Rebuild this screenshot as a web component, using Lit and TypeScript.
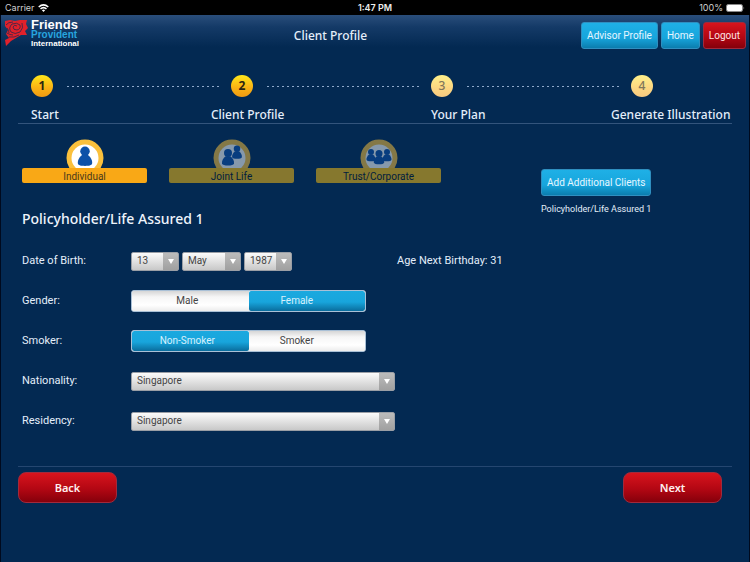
import { LitElement, html, svg, css } from "lit";
import { customElement, state } from "lit/decorators.js";
import { classMap } from "lit/directives/class-map.js";

const person = (x: number, y: number, s: number) => svg`
  <g transform="translate(${x} ${y}) scale(${s})">
    <circle cx="0" cy="-5" r="5"></circle>
    <path d="M-3 -1 C-6 1 -8 5 -7.5 8 C-7 10 -4 10.500 0 10.500 C4 10.500 7 10 7.500 8 C8 5 6 1 3 -1 Z"></path>
  </g>`;

const clientTypes = [
  { id: "individual", name: "Individual", figures: svg`${person(19, 17, 0.95)}` },
  { id: "joint", name: "Joint Life", figures: svg`${person(24, 13, 0.65)}${person(15, 18, 0.8)}` },
  {
    id: "trust",
    name: "Trust/Corporate",
    figures: svg`${person(11, 16, 0.6)}${person(27, 16, 0.6)}${person(19, 18, 0.7)}`,
  },
];

const steps = [
  { name: "Start", reached: true, wide: false },
  { name: "Client Profile", reached: true, wide: true },
  { name: "Your Plan", reached: false, wide: false },
  { name: "Generate Illustration", reached: false, wide: true },
];

@customElement("app-root")
export class AppRoot extends LitElement {
  @state() private clientType = "individual";

  static styles = css`
    :host {
      display: block;
      min-height: 100vh;
      box-sizing: border-box;
      background: #032952;
      border: solid #000a1e;
      border-width: 0 1px;
      color: #e4eefa;
      font-family: Roboto, "Noto Sans", sans-serif;
      font-size: 11px;
      line-height: 16px;
    }
    * { box-sizing: border-box; }
    button, select, input { font: inherit; margin: 0; }
    button { cursor: pointer; }
    .status {
      display: grid;
      grid-template-columns: 1fr auto 1fr;
      align-items: center;
      height: 15px;
      margin: 0 -1px;
      padding: 0 5px;
      background: #000;
      color: #d0d0d0;
      font: 9px/15px Inter, sans-serif;
    }
    .status .time { font-weight: 600; color: #eee; }
    .status .side { display: flex; align-items: center; gap: 3px; }
    .status .power { justify-content: flex-end; }
    .header {
      display: grid;
      grid-template-columns: 1fr auto 1fr;
      align-items: start;
      height: 50px;
      padding: 4px 3px 0 4px;
      background: linear-gradient(#2a4e7b, #143a67 12px, #032952 32px);
    }
    .brand { display: flex; gap: 2px; }
    .brand-text {
      display: flex;
      flex-direction: column;
      font: bold 13px/12px "Liberation Sans", sans-serif;
      color: #fff;
    }
    .brand-text .mid { font-size: 10px; line-height: 8px; color: #27a5df; }
    .brand-text .low { font-size: 8px; line-height: 9px; }
    h1, h2 { margin: 0; }
    h1 { font: 500 12px/16px "Noto Sans", sans-serif; padding: 9px 90px 0 0; }
    .actions { display: flex; justify-content: flex-end; gap: 3px; padding-top: 3px; }
    .blue, .red {
      height: 27px;
      padding: 0 5px;
      border-radius: 3px;
      border: 1px solid #2f8fc0;
      background: linear-gradient(#1fb0e6, #17a5dc 60%, #0b7dae);
      color: #e6f6ff;
      font-size: 10px;
      white-space: nowrap;
    }
    .red { border-color: #a12a3c; background: linear-gradient(#d8141d, #b30713 55%, #85000b); color: #ffe3e3; }
    .steps {
      display: grid;
      grid-template-columns: repeat(3, 1fr) 101px;
      list-style: none;
      margin: 0 17px;
      padding: 10px 0 0 13px;
      height: 59px;
      border-bottom: 1px solid #33547c;
    }
    .step-top { display: flex; align-items: center; gap: 14px; padding-right: 10px; }
    .ball {
      flex: none;
      width: 22px;
      height: 22px;
      border-radius: 50%;
      background: linear-gradient(#ffe81a, #fbb414 55%, #f09a12);
      color: #2c2410;
      font: bold 12px/22px "Noto Sans", sans-serif;
      text-align: center;
    }
    .ball.later { background: linear-gradient(#fff08a, #fcd882 55%, #f7c980); color: #80765a; font-weight: 500; }
    .dots {
      flex: 1;
      height: 1px;
      background: repeating-linear-gradient(90deg, #8fa9cb 0 2px, transparent 2px 5px);
    }
    .step-name {
      display: block;
      margin-top: 10px;
      font: 500 12px/16px "Noto Sans", sans-serif;
      white-space: nowrap;
    }
    .step-name.wide { margin-left: -20px; }
    .types { display: flex; align-items: flex-start; padding: 15px 20px 0 21px; }
    .type-list { display: flex; gap: 22px; flex: none; }
    .type {
      display: flex;
      flex-direction: column;
      align-items: center;
      width: 125px;
      padding: 0;
      border: 0;
      background: none;
      opacity: 0.52;
      color: #00132c;
    }
    .type.on { opacity: 1; color: #4a3a1c; }
    .type svg { display: block; }
    .type-name {
      align-self: stretch;
      height: 15px;
      border-radius: 2px;
      background: #ffc00f;
      font-size: 10px;
      line-height: 17px;
    }
    .type.on .type-name { background: #f9a816; }
    .add { display: flex; flex-direction: column; gap: 5px; margin: 30px 0 0 100px; font-size: 9px; }
    h2 { font: 500 14px/20px "Noto Sans", sans-serif; padding: 0 21px; margin-top: -8px; color: #eef4fc; }
    .form { padding: 12px 21px 0; }
    .row {
      display: grid;
      grid-template-columns: 109px 264px 1fr;
      align-items: center;
      height: 40px;
    }
    .group { display: flex; gap: 3px; }
    .pick { position: relative; display: block; }
    .pick::after {
      content: "";
      position: absolute;
      right: 5px;
      top: 7px;
      border: 3px solid transparent;
      border-top: 5px solid #fff;
      border-bottom: 0;
      pointer-events: none;
    }
    select {
      appearance: none;
      display: block;
      width: 100%;
      height: 19px;
      padding: 0 16px 0 5px;
      border: 1px solid #9a9ea5;
      border-radius: 2px;
      background:
        linear-gradient(#bcbcbc, #a0a0a0) right / 15px 100% no-repeat,
        linear-gradient(#fbfbfb, #c8c8c8);
      color: #444;
      font-size: 10px;
      line-height: 16px;
    }
    .day, .year { width: 48px; }
    .month { width: 59px; }
    .age { padding-left: 2px; }
    .toggle {
      display: grid;
      grid-template-columns: 1fr 1fr;
      width: 235px;
      height: 22px;
      border: 1px solid #a9c0d6;
      border-radius: 3px;
      overflow: hidden;
      background: #fff;
    }
    .toggle label { display: block; cursor: pointer; }
    .toggle input { position: absolute; opacity: 0; }
    .toggle span {
      display: block;
      height: 20px;
      padding-right: 6px;
      background: linear-gradient(#d6d6d6, #f6f6f6 6px, #fff 14px, #ececec);
      color: #444;
      font-size: 10px;
      line-height: 20px;
      text-align: center;
    }
    .toggle label:last-child span { padding-right: 20px; }
    .toggle input:checked + span {
      border-radius: 2px;
      background: linear-gradient(#1ba9df, #18a5dc 55%, #0a6d9d);
      color: #d9f1fc;
    }
    .footer {
      display: flex;
      justify-content: space-between;
      margin: 25px 17px 0;
      padding: 5px 10px 0 0;
      border-top: 1px solid #254670;
    }
    .footer .red {
      width: 99px;
      height: 31px;
      border-radius: 8px;
      color: #fff0f0;
      font: 600 11px/16px "Noto Sans", sans-serif;
    }
  `;

  private pick(label: string, size: string, value: string) {
    return html`<span class="pick ${size}">
      <select aria-label=${label}><option>${value}</option></select>
    </span>`;
  }

  private country(id: string, label: string) {
    return html`<div class="row">
      <label for=${id}>${label}:</label>
      <span class="pick"><select id=${id}><option>Singapore</option></select></span>
    </div>`;
  }

  private toggle(name: string, label: string, options: string[], chosen: string) {
    return html`<div class="row" role="radiogroup" aria-labelledby=${name}>
      <span id=${name}>${label}:</span>
      <div class="toggle">
        ${options.map(
          (o) => html`<label><input type="radio" name=${name} .checked=${o === chosen} /><span>${o}</span></label>`
        )}
      </div>
    </div>`;
  }

  render() {
    return html`
      <div class="status">
        <span class="side">Carrier
          <svg width="11" height="8" viewBox="0 0 11 8" fill="none" stroke="#fff" stroke-width="1.500">
            <path d="M0.700 3 Q5.500 -1.200 10.300 3 M2.500 4.900 Q5.500 2.300 8.500 4.900"></path>
            <path d="M3.900 6.200 Q5.500 5 7.100 6.200 L5.500 8 Z" fill="#fff" stroke="none"></path>
          </svg>
        </span>
        <span class="time">1:47 PM</span>
        <span class="side power">100%
          <svg width="19" height="8" viewBox="0 0 19 8">
            <rect x="0.500" y="0.500" width="16" height="7" rx="1.500" fill="none" stroke="#888"></rect>
            <rect x="1" y="1" width="15" height="6" rx="1" fill="#fff"></rect>
            <path d="M17.500 2.500 Q19 4 17.500 5.500 Z" fill="#888"></path>
          </svg>
        </span>
      </div>

      <header class="header">
        <div class="brand">
          <svg width="24" height="28" viewBox="0 0 24 28" aria-hidden="true">
            <path
              fill="#e0212b"
              d="M0 2 L5 1 L10 2 L15 1 L22 1 L21 5 L23 9 L20 12 L22 16 L16 16 L11 19 L6 22 L1 27 L0 21 L4 19 L1 15 L3 11 L0 7 Z"
            ></path>
            <g fill="none" stroke="#14264f" stroke-width="0.700">
              <path d="M12 7 q-3 -2 -4 1 q0 3 4 3 q4 -1 3 -5 q-3 -3 -8 -1 q-4 4 -1 8 q4 3 9 0 q4 -4 2 -9"></path>
              <path d="M1 6 Q3 3 8 3 M2 14 Q5 16 8 16 M4 18 Q9 19 14 16 M2 9 Q4 11 4 14"></path>
            </g>
          </svg>
          <div class="brand-text">
            <span>Friends</span><span class="mid">Provident</span><span class="low">International</span>
          </div>
        </div>
        <h1>Client Profile</h1>
        <div class="actions">
          <button class="blue">Advisor Profile</button>
          <button class="blue">Home</button>
          <button class="red">Logout</button>
        </div>
      </header>

      <ol class="steps">
        ${steps.map(
          (s, i) => html`<li>
            <div class="step-top">
              <span class=${classMap({ ball: true, later: !s.reached })}>${i + 1}</span>
              ${i < steps.length - 1 ? html`<span class="dots"></span>` : ""}
            </div>
            <span class=${classMap({ "step-name": true, wide: s.wide })}>${s.name}</span>
          </li>`
        )}
      </ol>

      <section class="types">
        <div class="type-list">
          ${clientTypes.map(
            (t) => html`<button
              class=${classMap({ type: true, on: t.id === this.clientType })}
              aria-pressed=${t.id === this.clientType}
              @click=${() => (this.clientType = t.id)}
            >
              <svg width="38" height="29" viewBox="0 0 38 29" fill="#0d51a8">
                <circle cx="19" cy="19" r="16" fill="#fff" stroke="#fac03c" stroke-width="5"></circle>
                ${t.figures}
              </svg>
              <span class="type-name">${t.name}</span>
            </button>`
          )}
        </div>
        <div class="add">
          <button class="blue">Add Additional Clients</button>
          <span>Policyholder/Life Assured 1</span>
        </div>
      </section>

      <h2>Policyholder/Life Assured 1</h2>
      <form class="form">
        <div class="row" role="group" aria-labelledby="dob">
          <span id="dob">Date of Birth:</span>
          <div class="group">
            ${this.pick("Day", "day", "13")}${this.pick("Month", "month", "May")}${this.pick("Year", "year", "1987")}
          </div>
          <span class="age">Age Next Birthday: 31</span>
        </div>
        ${this.toggle("gender", "Gender", ["Male", "Female"], "Female")}
        ${this.toggle("smoker", "Smoker", ["Non-Smoker", "Smoker"], "Non-Smoker")}
        ${this.country("nationality", "Nationality")} ${this.country("residency", "Residency")}
      </form>

      <footer class="footer">
        <button class="red">Back</button>
        <button class="red">Next</button>
      </footer>
    `;
  }
}
